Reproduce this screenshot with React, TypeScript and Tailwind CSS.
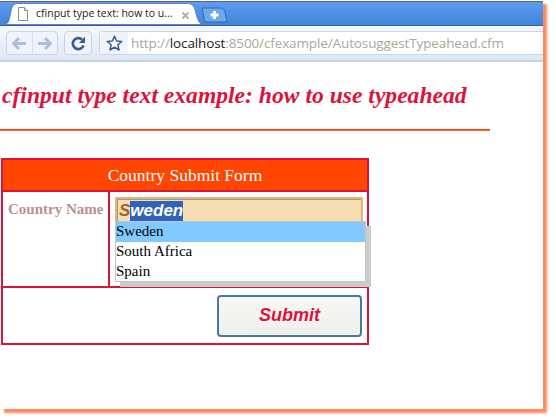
import React from "react";

function Tab() {
  return (
    <div className="relative ml-[4px] flex h-[24px] w-[198px] items-center pl-[32px] pr-[19px]">
      <svg className="absolute inset-0" width="198" height="24" viewBox="0 0 198 24">
        <path d="M0 23.5 C5 23 5 20 7 10 C8.5 4 10 2.5 15 2.5 L183 2.5 C188 2.5 190 5 191.5 10 C193 18 195 22 198 23.5 Z" fill="#ffffff" stroke="#5a86bd" strokeWidth="1" />
      </svg>
      <svg className="absolute left-[14px] top-[6px]" width="10" height="14" viewBox="0 0 10 14">
        <path d="M0.5 0.5 H6.500 L9.500 3.500 V13.500 H0.500 Z" fill="#fff" stroke="#8a8a8a" />
        <path d="M6.500 0.500 V3.500 H9.500" fill="#e8e8e8" stroke="#8a8a8a" />
      </svg>
      <span className="relative mt-[2px] whitespace-nowrap font-['Open_Sans',sans-serif] text-[10.5px] text-[#222]">
        cfinput type text: how to u...
      </span>
      <svg className="absolute left-[177px] top-[10px]" width="9" height="9" viewBox="0 0 9 9">
        <path d="M1.5 1.5 L7.5 7.5 M7.5 1.5 L1.5 7.5" stroke="#a9adb5" strokeWidth="1.8" />
      </svg>
    </div>
  );
}

function NavButton({ children }: { children: React.ReactNode }) {
  return <div className="flex h-full flex-1 items-center justify-center">{children}</div>;
}

export default function App() {
  return (
    <div className="h-[419px] w-[556px] overflow-hidden bg-white">
      <div className="flex h-[409px] w-[543px] flex-col bg-white shadow-[4px_4px_2px_#ff8a60]">
        {/* tab strip */}
        <div className="mt-[1px] flex h-[25px] shrink-0 items-end border-t border-b border-t-[#5b6670] border-b-[#2f5f9f] bg-gradient-to-b from-[#5d9df0] to-[#4284da]">
          <Tab />
          <svg className="-ml-[1px] mb-[2px]" width="28" height="16" viewBox="0 0 28 16">
            <path d="M1 1 H20 C22 1 23 2 24 5 L26 15 H6 C4 15 3.500 14 3 11 Z" fill="#6ea7ea" stroke="#2f6bb5" />
            <path d="M13.500 4 V12 M9.500 8 H17.500" stroke="#fff" strokeWidth="3" />
          </svg>
        </div>

        {/* toolbar */}
        <div className="flex h-[36px] shrink-0 items-center gap-[6px] border-b-2 border-[#c5d3e6] bg-gradient-to-b from-[#f3f7fd] to-[#dfe8f5] pl-[6px]">
          <div className="flex h-[24px] w-[52px] divide-x divide-[#d5deea] rounded-[4px] border border-[#c9d5e6] bg-[#f0f4fa]">
            <NavButton>
              <svg width="15" height="13" viewBox="0 0 15 13">
                <path d="M7 1 L1.500 6.500 L7 12 M2 6.500 H14" fill="none" stroke="#a8bfe0" strokeWidth="3" />
              </svg>
            </NavButton>
            <NavButton>
              <svg width="15" height="13" viewBox="0 0 15 13">
                <path d="M8 1 L13.500 6.500 L8 12 M13 6.500 H1" fill="none" stroke="#a8bfe0" strokeWidth="3" />
              </svg>
            </NavButton>
          </div>
          <div className="flex h-[24px] w-[28px] items-center justify-center rounded-[4px] border border-[#c9d5e6] bg-[#f0f4fa]">
            <svg width="15" height="15" viewBox="0 0 15 15">
              <path d="M12.500 9.500 A5.500 5.500 0 1 1 11 3.500" fill="none" stroke="#35608f" strokeWidth="2.600" />
              <path d="M14 0.500 V7 H8 Z" fill="#35608f" />
            </svg>
          </div>
          <div className="ml-[1px] flex h-[24px] flex-1 items-center rounded-l-[4px] border-y border-l border-[#c9d5e6]">
            <div className="flex h-full w-[28px] items-center justify-center bg-[#f0f4fa]">
              <svg width="17" height="16" viewBox="0 0 17 16">
                <path d="M8.500 1.200 L10.600 6 L15.800 6.400 L11.800 9.800 L13 15 L8.500 12.200 L4 15 L5.200 9.800 L1.200 6.400 L6.400 6 Z" fill="#fff" stroke="#2f5f96" strokeWidth="1.500" strokeLinejoin="round" />
              </svg>
            </div>
            <div className="flex h-full flex-1 items-center bg-white pl-[3px] font-['Open_Sans',sans-serif] text-[13.5px] tracking-[-0.12px] text-[#a9a79c]">
              http://<span className="text-[#222]">localhost</span>:8500/cfexample/AutosuggestTypeahead.cfm
            </div>
          </div>
        </div>

        {/* page */}
        <div className="flex-1 font-['Liberation_Serif',serif]">
          <h1 className="mt-[18px] h-[30px] whitespace-nowrap pl-[2px] text-[23.6px] font-bold italic leading-[30px] text-[#dc143c]">
            cfinput type text example: how to use typeahead
          </h1>
          <div className="mt-[19px] h-[2px] w-[490px] border-t border-[#ff4500] bg-[#ff6a3a]" />

          <div className="ml-[1px] mt-[27px] w-[368px] border-2 border-[#dc143c]">
            <div className="flex h-[32px] items-center justify-center border-b-2 border-[#dc143c] bg-[#ff4500] text-[17.5px] text-white">
              Country Submit Form
            </div>
            <div className="flex h-[96px] border-b-2 border-[#dc143c]">
              <div className="w-[107px] border-r-2 border-[#dc143c] pl-[5px] pt-[6px] text-[15px] font-bold text-[#bc8f8f]">
                Country Name
              </div>
              <div className="relative flex-1 pl-[5px] pt-[5px]">
                <div className="flex h-[27px] w-[248px] items-start border-2 border-[#e8b56a] bg-[#f5deb3] pl-[2px] pt-[2px] font-['Liberation_Sans',sans-serif] text-[17px] font-bold italic leading-[20px] shadow-[inset_1px_1px_0_#999]">
                  <span className="text-[#a0622d]">S</span>
                  <span className="bg-[#2f62b8] text-white">weden</span>
                </div>
                <div className="absolute left-[5px] top-[29px] w-[251px] border border-[#c4c4c4] bg-white text-[15px] leading-[19px] text-black shadow-[5px_5px_0_#cccccc]">
                  <div className="h-[20px] bg-[#80caff]">Sweden</div>
                  <div className="h-[20px]">South Africa</div>
                  <div className="h-[19px]">Spain</div>
                </div>
              </div>
            </div>
            <div className="flex h-[55px] items-center justify-end pr-[5px]">
              <button className="h-[42px] w-[145px] rounded-[4px] border-2 border-[#4a76a8] bg-gradient-to-b from-[#f7f7f5] to-[#efefea] font-['Liberation_Sans',sans-serif] text-[18px] font-bold italic text-[#dc143c]">
                Submit
              </button>
            </div>
          </div>
        </div>
      </div>
    </div>
  );
}
